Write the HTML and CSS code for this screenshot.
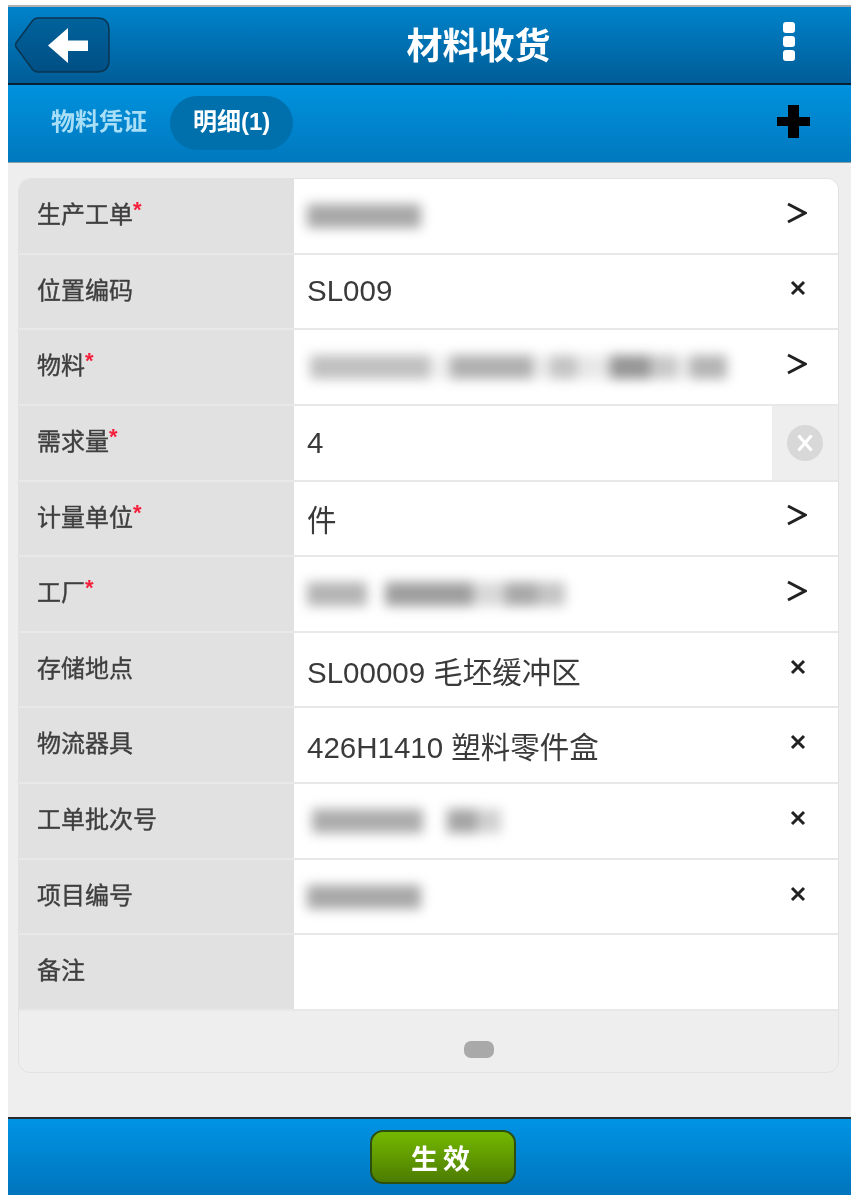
FILE: index.html
```html
<!DOCTYPE html>
<html lang="zh-CN">
  <head>
    <meta charset="UTF-8" />
    <meta name="viewport" content="width=device-width, initial-scale=1.0" />
    <title>材料收货</title>
    <link rel="stylesheet" href="styles.css">
  </head>
  <body>
    <div class="app">
      <header class="topbar">
        <button type="button" class="back-btn" aria-label="返回">
          <svg width="96" height="56" viewBox="0 0 96 56">
            <defs>
              <linearGradient id="backFill" x1="0" y1="0" x2="0" y2="1">
                <stop offset="0" stop-color="#00629c" />
                <stop offset="1" stop-color="#004f84" />
              </linearGradient>
            </defs>
            <path d="M2 30 Q1 28 2 26 L19 3 Q21 1 24 1 H83 Q95 1 95 13 V43 Q95 55 83 55 H24 Q21 55 19 53 Z" fill="url(#backFill)" stroke="#0b3550" stroke-width="1.5" />
            <path d="M34 28.5 L54 11 V23.5 H74 V34 H54 V46 Z" fill="#fff" />
          </svg>
        </button>
        <h1 class="title">材料收货</h1>
        <div class="menu-btn"><span></span><span></span><span></span></div>
      </header>

      <nav class="subbar">
        <a class="tab">物料凭证</a>
        <a class="tab tab-active">明细(1)</a>
        <svg class="plus" width="33" height="33" viewBox="0 0 33 33">
          <path d="M11 0 H22 V12 H33 V21 H22 V33 H11 V21 H0 V12 H11 Z" fill="#000" />
        </svg>
      </nav>

      <main class="content">
        <div class="card">
          <div class="rows">
            <div class="row">
              <div class="label">生产工单<em>*</em></div>
              <div class="value"><span class="mask mask-sm"></span></div>
              <div class="action"><svg class="chevron" viewBox="0 0 20 22"><path d="M1 2 L18 11 L1 20" /></svg></div>
            </div>
            <div class="row">
              <div class="label">位置编码</div>
              <div class="value">SL009</div>
              <div class="action"><svg class="cross" viewBox="0 0 16 16"><path d="M2 2 L14 14 M14 2 L2 14" /></svg></div>
            </div>
            <div class="row">
              <div class="label">物料<em>*</em></div>
              <div class="value"><span class="mask mask-xl"></span></div>
              <div class="action"><svg class="chevron" viewBox="0 0 20 22"><path d="M1 2 L18 11 L1 20" /></svg></div>
            </div>
            <div class="row">
              <div class="label">需求量<em>*</em></div>
              <div class="value">4</div>
              <div class="action action-clear">
                <svg width="36" height="36" viewBox="0 0 36 36">
                  <circle cx="18" cy="18" r="18" fill="#d8d8d8" />
                  <path d="M11.5 10.5 L24.5 25.5 M24.5 10.5 L11.5 25.5" stroke="#fff" stroke-width="3.2" />
                </svg>
              </div>
            </div>
            <div class="row">
              <div class="label">计量单位<em>*</em></div>
              <div class="value">件</div>
              <div class="action"><svg class="chevron" viewBox="0 0 20 22"><path d="M1 2 L18 11 L1 20" /></svg></div>
            </div>
            <div class="row">
              <div class="label">工厂<em>*</em></div>
              <div class="value"><span class="mask mask-lg"></span></div>
              <div class="action"><svg class="chevron" viewBox="0 0 20 22"><path d="M1 2 L18 11 L1 20" /></svg></div>
            </div>
            <div class="row">
              <div class="label">存储地点</div>
              <div class="value">SL00009 毛坯缓冲区</div>
              <div class="action"><svg class="cross" viewBox="0 0 16 16"><path d="M2 2 L14 14 M14 2 L2 14" /></svg></div>
            </div>
            <div class="row">
              <div class="label">物流器具</div>
              <div class="value">426H1410 塑料零件盒</div>
              <div class="action"><svg class="cross" viewBox="0 0 16 16"><path d="M2 2 L14 14 M14 2 L2 14" /></svg></div>
            </div>
            <div class="row">
              <div class="label">工单批次号</div>
              <div class="value"><span class="mask mask-md"></span></div>
              <div class="action"><svg class="cross" viewBox="0 0 16 16"><path d="M2 2 L14 14 M14 2 L2 14" /></svg></div>
            </div>
            <div class="row">
              <div class="label">项目编号</div>
              <div class="value"><span class="mask mask-sm"></span></div>
              <div class="action"><svg class="cross" viewBox="0 0 16 16"><path d="M2 2 L14 14 M14 2 L2 14" /></svg></div>
            </div>
            <div class="row">
              <div class="label">备注</div>
              <div class="value"></div>
              <div class="action"></div>
            </div>
          </div>
          <div class="card-foot"><span class="grip"></span></div>
        </div>
      </main>

      <footer class="bottombar">
        <button type="button" class="btn-apply">生效</button>
      </footer>
    </div>
  </body>
</html>
```

FILE: styles.css
```css
body {
  margin: 0;
  background-color: #fff;
  font-family: "Liberation Sans", "Noto Sans CJK SC", sans-serif;
  color: #333;
}

.app {
  width: 843px;
  margin: 5px 0 0 8px;
  border-top: 2px solid #b0b0b0;
  filter: blur(0.6px);
}

/* top title bar */
.topbar {
  display: flex;
  align-items: center;
  height: 76px;
  background: linear-gradient(#0083cb, #005c96);
  border-bottom: 2px solid #08202f;
}

.back-btn {
  display: block;
  flex: none;
  margin: 0 0 0 6px;
  padding: 0;
  border: 0;
  background: none;
  line-height: 0;
}

.title {
  flex: 1;
  margin: 0 0 4px;
  padding-left: 64px;
  color: #fff;
  font-size: 36px;
  font-weight: 700;
  text-align: center;
}

.menu-btn {
  display: flex;
  flex: none;
  flex-direction: column;
  gap: 3px;
  width: 68px;
  margin-bottom: 8px;
}

.menu-btn span {
  width: 12px;
  height: 11px;
  border-radius: 3px;
  background-color: #fff;
}

/* tabs */
.subbar {
  display: flex;
  align-items: center;
  height: 78px;
  padding: 0 0 2px 20px;
  box-sizing: border-box;
  background: linear-gradient(#0092de, #0078be);
  border-bottom: 1px solid #8aa0ad;
}

.tab {
  height: 54px;
  padding: 0 23px;
  border-radius: 27px;
  color: #a9def7;
  font-size: 24px;
  font-weight: 700;
  line-height: 52px;
}

.tab-active {
  background-color: #0070ad;
  color: #fff;
}

.plus {
  margin: 0 41px 2px auto;
}

/* form card */
.content {
  height: 954px;
  padding: 15px 12px 0 10px;
  box-sizing: border-box;
  background-color: #eee;
}

.card {
  overflow: hidden;
  border: 1px solid #e2e2e2;
  border-radius: 12px;
  background-color: #eee;
}

.rows {
  display: grid;
  grid-template-rows: repeat(11, 1fr);
  height: 832px;
}

.row {
  display: grid;
  grid-template-columns: 275px 1fr 66px;
  border-bottom: 2px solid #e8e8e8;
  background-color: #fff;
}

.label {
  display: flex;
  align-items: flex-start;
  padding: 21px 0 0 18px;
  background-color: #e1e1e1;
  color: #3f3f3f;
  font-size: 24px;
  line-height: 30px;
  -webkit-text-stroke: 0.4px #3f3f3f;
}

.label em {
  color: #f5203c;
  font-size: 22px;
  font-style: normal;
  font-weight: 700;
  line-height: 20px;
  -webkit-text-stroke: 0;
}

.value {
  display: flex;
  align-items: center;
  padding-left: 13px;
  color: #3a3a3a;
  font-size: 29.5px;
}

/* values hidden in the screenshot, drawn as blurred word blocks */
.mask {
  display: block;
  height: 24px;
  filter: blur(6px);
}

.mask-sm {
  width: 114px;
  background-color: #a8a8a8;
}

.mask-md {
  width: 194px;
  background: linear-gradient(90deg, transparent 5px, #acacac 5px 116px, transparent 116px 140px, #a4a4a4 140px 170px, #d0d0d0 170px 194px);
}

.mask-lg {
  width: 258px;
  background: linear-gradient(90deg, #b4b4b4 0 60px, transparent 60px 78px, #9e9e9e 78px 166px, #d8d8d8 166px 198px, #a8a8a8 198px 230px, #c4c4c4 230px 258px);
}

.mask-xl {
  width: 420px;
  background: linear-gradient(90deg, transparent 3px, #c0c0c0 3px 123px, #f0f0f0 123px 143px, #b0b0b0 143px 226px, #ececec 226px 243px, #c4c4c4 243px 270px, #e8e8e8 270px 303px, #969696 303px 343px, #c8c8c8 343px 370px, #ececec 370px 383px, #b4b4b4 383px 420px);
}

.action {
  display: flex;
  align-items: center;
  padding-left: 15px;
  padding-bottom: 6px;
}

.action-clear {
  justify-content: center;
  padding: 0;
  background-color: #eee;
}

.chevron {
  width: 20px;
  height: 22px;
  fill: none;
  stroke: #222;
  stroke-width: 3;
}

.cross {
  width: 16px;
  height: 16px;
  margin-left: 3px;
  fill: none;
  stroke: #222;
  stroke-width: 3;
}

.card-foot {
  display: flex;
  align-items: center;
  height: 61px;
  padding: 16px 0 0 445px;
  box-sizing: border-box;
}

.grip {
  width: 30px;
  height: 17px;
  border-radius: 7px;
  background-color: #a9a9a9;
}

/* bottom action bar */
.bottombar {
  display: flex;
  align-items: center;
  justify-content: center;
  height: 76px;
  padding-left: 27px;
  background: linear-gradient(#0094e4, #0074bc);
  border-top: 2px solid #2a2a2a;
}

.btn-apply {
  width: 146px;
  height: 54px;
  border: 2px solid #2c4f10;
  border-radius: 13px;
  background: linear-gradient(#74b800, #4d7c00);
  color: #fff;
  font-family: inherit;
  font-size: 27px;
  font-weight: 700;
  letter-spacing: 5px;
}
```
